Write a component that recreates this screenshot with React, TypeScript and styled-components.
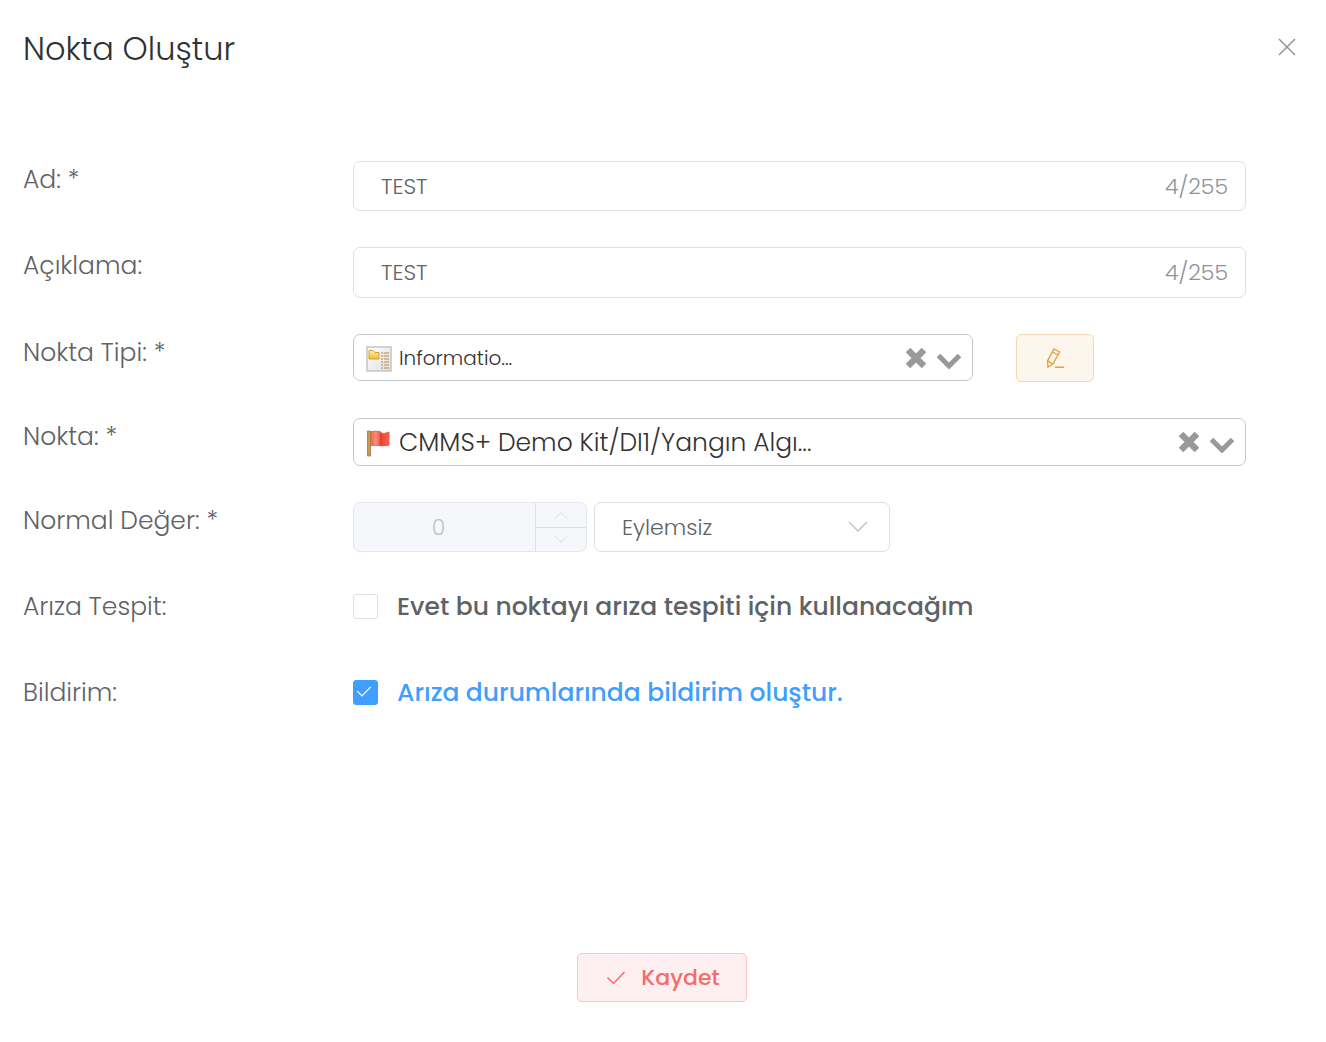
import React, { useState } from 'react';
import styled, { createGlobalStyle } from 'styled-components';

const GlobalStyle = createGlobalStyle`
  *, *::before, *::after { box-sizing: border-box; }
  body { margin: 0; background: #fff; }
  body, input, select, button { font-family: Poppins, Inter, 'Noto Sans', sans-serif; font-weight: 300; }
`;

const Dialog = styled.main`
  display: flex;
  flex-direction: column;
  padding: 24px 23px 40px;
  color: #606266;
`;

const Header = styled.header`
  display: flex;
  justify-content: space-between;
  align-items: flex-start;
  margin-bottom: 87px;
`;

const Title = styled.h1`
  margin: 0;
  font-size: 32px;
  font-weight: 300;
  line-height: 50px;
  color: #303133;
`;

const CloseButton = styled.button`
  display: grid;
  place-items: center;
  width: 32px;
  height: 46px;
  padding: 0;
  border: 0;
  background: none;
  color: #909399;
  cursor: pointer;
`;

const Form = styled.form`
  display: flex;
  flex-direction: column;
`;

const Fields = styled.div`
  display: flex;
  flex-direction: column;
  gap: 36px;
  padding-right: 57px;
`;

const Row = styled.div`
  display: grid;
  grid-template-columns: 330px minmax(0, 1fr);
  align-items: start;
`;

const RowLabel = styled.label`
  font-size: 25px;
  line-height: 38px;
`;

const TextBox = styled.div<{ $height: number }>`
  display: flex;
  align-items: center;
  height: ${(p) => p.$height}px;
  padding: 0 17px 0 27px;
  border: 1px solid #dcdfe6;
  border-radius: 7px;
  font-size: 22px;
`;

const TextInput = styled.input`
  flex: 1;
  min-width: 0;
  padding: 0;
  border: 0;
  outline: 0;
  background: none;
  font-size: 22px;
  color: #606266;
`;

const Counter = styled.span`
  color: #909399;
`;

const PickerLine = styled.div`
  display: grid;
  grid-template-columns: minmax(0, 620fr) minmax(0, 273fr);
  align-items: start;
`;

const Picker = styled.div<{ $height: number }>`
  display: grid;
  align-items: center;
  height: ${(p) => p.$height}px;
  > * { grid-area: 1 / 1; }
`;

const PickerSelect = styled.select<{ $size: number }>`
  width: 100%;
  height: 100%;
  padding: 0 96px 0 45px;
  border: 1px solid #c8c8c8;
  border-radius: 7px;
  appearance: none;
  background: #fff;
  color: #333;
  font-size: ${(p) => p.$size}px;
`;

const PickerIcon = styled.span`
  display: flex;
  padding: 2px 0 0 13px;
  justify-self: start;
  pointer-events: none;
`;

const PickerActions = styled.div`
  display: flex;
  align-items: center;
  gap: 9px;
  justify-self: end;
  padding-right: 11px;
  color: #999;
  pointer-events: none;
`;

const ClearButton = styled.button`
  display: flex;
  padding: 0;
  border: 0;
  background: none;
  color: inherit;
  pointer-events: auto;
  cursor: pointer;
`;

const EditButton = styled.button`
  display: grid;
  place-items: center;
  width: 78px;
  height: 48px;
  margin-left: 43px;
  padding: 0;
  border: 1px solid #f5dab1;
  border-radius: 5px;
  background: #fdf6ec;
  color: #e6a23c;
  cursor: pointer;
`;

const ValueLine = styled.div`
  display: flex;
  gap: 7px;
`;

const NumberBox = styled.div`
  display: grid;
  grid-template-columns: minmax(0, 1fr) 51px;
  width: 234px;
  height: 50px;
  border: 1px solid #e4e7ed;
  border-radius: 7px;
  background: #f5f7fa;
  overflow: hidden;
`;

const NumberInput = styled.input`
  width: 100%;
  padding: 0 12px 0 0;
  border: 0;
  background: none;
  text-align: center;
  font-size: 22px;
  color: #c0c4cc;
  appearance: textfield;
  &::-webkit-inner-spin-button { appearance: none; }
`;

const Steps = styled.div`
  display: grid;
  grid-template-rows: 1fr 1fr;
  border-left: 1px solid #dcdfe6;
`;

const StepButton = styled.button`
  display: grid;
  place-items: center;
  padding: 0;
  border: 0;
  background: none;
  color: #e0e3e9;
  & + & { border-top: 1px solid #dcdfe6; }
`;

const StateBox = styled.div`
  display: grid;
  align-items: center;
  width: 296px;
  height: 50px;
  color: #c0c4cc;
  > * { grid-area: 1 / 1; }
  > svg { justify-self: end; margin-right: 22px; pointer-events: none; }
`;

const StateSelect = styled.select`
  width: 100%;
  height: 50px;
  padding: 0 56px 0 27px;
  border: 1px solid #dcdfe6;
  border-radius: 7px;
  appearance: none;
  background: #fff;
  font-size: 22px;
  color: #606266;
`;

const CheckLine = styled.label<{ $on: boolean }>`
  display: flex;
  align-items: center;
  gap: 19px;
  height: 36px;
  margin-bottom: 14px;
  font-size: 25px;
  font-weight: 500;
  line-height: 34px;
  color: ${(p) => (p.$on ? '#409eff' : '#606266')};
  cursor: pointer;
`;

const CheckText = styled.span`
  padding-top: 2px;
`;

const Tick = styled.span`
  display: grid;
  align-items: center;
  flex: none;
  color: #fff;
  > * { grid-area: 1 / 1; }
  > svg { margin-left: 3px; pointer-events: none; }
`;

const TickInput = styled.input`
  width: 25px;
  height: 25px;
  margin: 0;
  appearance: none;
  border: 1px solid #dcdfe6;
  border-radius: 3px;
  background: #fff;
  &:checked { border-color: #409eff; background: #409eff; }
`;

const Footer = styled.footer`
  display: flex;
  justify-content: center;
  padding-right: 2px;
  margin-top: 229px;
`;

const SaveButton = styled.button`
  display: flex;
  align-items: center;
  justify-content: center;
  gap: 15px;
  width: 170px;
  height: 49px;
  padding: 0 0 0 2px;
  border: 1px solid #fbc4c4;
  border-radius: 5px;
  background: #feeff0;
  font-size: 22px;
  font-weight: 500;
  color: #f56c6c;
  cursor: pointer;
`;

const Chevron = ({ width, up }: { width: number; up?: boolean }) => (
  <svg width={width} height={width / 2 + 2} viewBox="0 0 20 12" fill="none" stroke="currentColor" strokeWidth="1.5" aria-hidden="true">
    <path d={up ? 'M1 11 10 2l9 9' : 'M1 1l9 9 9-9'} />
  </svg>
);

const Check = ({ width }: { width: number }) => (
  <svg width={width} height={width * 0.7} viewBox="0 0 20 14" fill="none" stroke="currentColor" strokeWidth="1.5" aria-hidden="true">
    <path d="M1.500 6.500l6 6L18.500 1" />
  </svg>
);

const Actions = ({ label }: { label: string }) => (
  <PickerActions>
    <ClearButton type="button" aria-label={label}>
      <svg width="22" height="22" viewBox="0 0 22 22" fill="none" stroke="currentColor" strokeWidth="6.500" aria-hidden="true">
        <path d="M3 3l16 16M19 3 3 19" />
      </svg>
    </ClearButton>
    <svg width="26" height="22" viewBox="0 0 26 22" fill="none" stroke="currentColor" strokeWidth="5" aria-hidden="true">
      <path d="M2.500 8.500 13 19 23.500 8.500" />
    </svg>
  </PickerActions>
);

const DocumentIcon = () => (
  <svg width="26" height="26" viewBox="0 0 26 26" aria-hidden="true">
    <defs>
      <linearGradient id="paper" x2="1" y2="1"><stop stopColor="#fff" /><stop offset="1" stopColor="#dedfe3" /></linearGradient>
      <linearGradient id="folder" x2="0" y2="1"><stop stopColor="#fff0a0" /><stop offset="1" stopColor="#f1bd3b" /></linearGradient>
    </defs>
    <path d="M1 1h24v24H1z" fill="url(#paper)" stroke="#c3c5ca" strokeWidth="1.500" />
    <path d="M3 4.500h4l2 2h4v6.500H3z" fill="url(#folder)" stroke="#d9a028" />
    <path d="M15 7h8M15 10h8M15 13h8M15 16h8M15 19h8M15 22h8" stroke="#c9a57b" strokeWidth="1.500" />
    <path d="M17.500 6v17" stroke="#e9e4df" />
  </svg>
);

const FlagIcon = () => (
  <svg width="26" height="28" viewBox="0 0 26 28" aria-hidden="true">
    <defs>
      <linearGradient id="cloth"><stop stopColor="#ef5b4b" /><stop offset=".3" stopColor="#ff8f7a" /><stop offset=".6" stopColor="#ea4738" /><stop offset="1" stopColor="#fb604d" /></linearGradient>
    </defs>
    <path d="M4 3c4-1 7-1 11 0v1c3 1 5 0 8-1v13c-3 1-5 1-8 0v1c-4-1-7-1-11 0z" fill="url(#cloth)" stroke="#e9604f" />
    <path d="M15 4v12l2 1" stroke="#d93529" fill="none" />
    <path d="M1.500 2h3v25h-3z" fill="#c79a58" stroke="#a87b3c" strokeWidth=".8" />
  </svg>
);

const PencilIcon = () => (
  <svg width="20" height="22" viewBox="0 0 20 22" fill="none" stroke="currentColor" strokeWidth="1.400" aria-hidden="true">
    <path d="M9 2l5.500 3-6.500 12-5 3-.500-6zM7.500 5l5.500 3M2.500 14l2 .500 1 1.500 2.500 1M10 20.300h9" />
  </svg>
);

function CountedInput({ id, height }: { id: string; height: number }) {
  const [text, setText] = useState('TEST');
  return (
    <TextBox $height={height}>
      <TextInput id={id} value={text} maxLength={255} onChange={(e) => setText(e.target.value)} />
      <Counter>{text.length}/255</Counter>
    </TextBox>
  );
}

function CheckField({ id, text, initial }: { id: string; text: string; initial: boolean }) {
  const [on, setOn] = useState(initial);
  return (
    <CheckLine $on={on}>
      <Tick>
        <TickInput id={id} type="checkbox" checked={on} onChange={(e) => setOn(e.target.checked)} />
        {on && <Check width={16} />}
      </Tick>
      <CheckText>{text}</CheckText>
    </CheckLine>
  );
}

export default function App() {
  return (
    <Dialog>
      <GlobalStyle />
      <Header>
        <Title>Nokta Oluştur</Title>
        <CloseButton type="button" aria-label="Kapat">
          <svg width="18" height="18" viewBox="0 0 18 18" stroke="currentColor" strokeWidth="1.500" aria-hidden="true">
            <path d="M1 1l16 16M17 1 1 17" />
          </svg>
        </CloseButton>
      </Header>
      <Form onSubmit={(e) => e.preventDefault()}>
        <Fields>
          <Row>
            <RowLabel htmlFor="name">Ad: *</RowLabel>
            <CountedInput id="name" height={50} />
          </Row>
          <Row>
            <RowLabel htmlFor="description">Açıklama:</RowLabel>
            <CountedInput id="description" height={51} />
          </Row>
          <Row>
            <RowLabel htmlFor="type">Nokta Tipi: *</RowLabel>
            <PickerLine>
              <Picker $height={47}>
                <PickerSelect id="type" $size={20}><option>Informatio...</option></PickerSelect>
                <PickerIcon><DocumentIcon /></PickerIcon>
                <Actions label="Nokta tipini temizle" />
              </Picker>
              <EditButton type="button" aria-label="Düzenle"><PencilIcon /></EditButton>
            </PickerLine>
          </Row>
          <Row>
            <RowLabel htmlFor="point">Nokta: *</RowLabel>
            <Picker $height={48}>
              <PickerSelect id="point" $size={25}><option>CMMS+ Demo Kit/DI1/Yangın Algı...</option></PickerSelect>
              <PickerIcon><FlagIcon /></PickerIcon>
              <Actions label="Noktayı temizle" />
            </Picker>
          </Row>
          <Row>
            <RowLabel htmlFor="normal">Normal Değer: *</RowLabel>
            <ValueLine>
              <NumberBox>
                <NumberInput id="normal" type="number" value={0} disabled readOnly />
                <Steps>
                  <StepButton type="button" disabled aria-label="Artır"><Chevron width={14} up /></StepButton>
                  <StepButton type="button" disabled aria-label="Azalt"><Chevron width={14} /></StepButton>
                </Steps>
              </NumberBox>
              <StateBox>
                <StateSelect aria-label="Durum"><option>Eylemsiz</option></StateSelect>
                <Chevron width={20} />
              </StateBox>
            </ValueLine>
          </Row>
          <Row>
            <RowLabel htmlFor="fault">Arıza Tespit:</RowLabel>
            <CheckField id="fault" text="Evet bu noktayı arıza tespiti için kullanacağım" initial={false} />
          </Row>
          <Row>
            <RowLabel htmlFor="notify">Bildirim:</RowLabel>
            <CheckField id="notify" text="Arıza durumlarında bildirim oluştur." initial />
          </Row>
        </Fields>
        <Footer>
          <SaveButton type="submit"><Check width={20} />Kaydet</SaveButton>
        </Footer>
      </Form>
    </Dialog>
  );
}
